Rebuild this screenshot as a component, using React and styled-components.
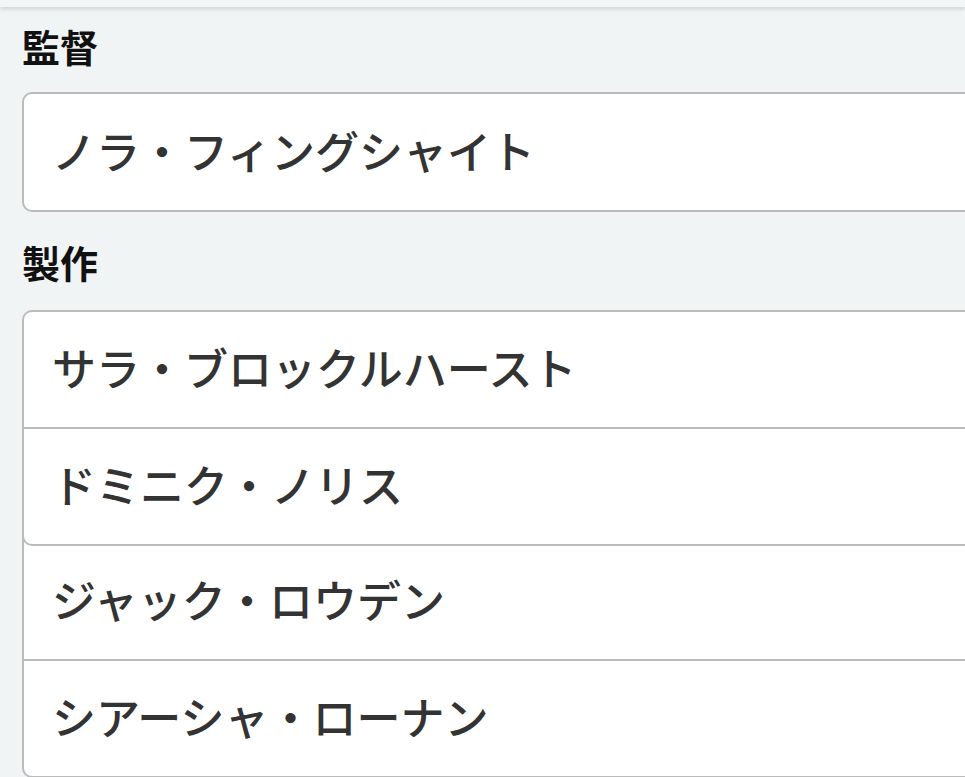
import React from 'react'
import styled, { createGlobalStyle } from 'styled-components'

const GlobalStyle = createGlobalStyle`
  html, body {
    margin: 0;
    padding: 0;
    background: #f1f4f5;
    overflow: hidden;
  }
  body {
    font-family: "Noto Sans CJK JP", "Noto Sans", sans-serif;
  }
`

const Page = styled.div`
  min-height: 777px;
  overflow: hidden;
`

const TopBar = styled.div`
  height: 7px;
  background: #f3f5f6;
  box-shadow: 0 2px 4px rgba(0, 0, 0, 0.14);
`

const Content = styled.div`
  padding: 0 0 0 22px;
  margin-right: -60px;
`

const Heading = styled.h2`
  margin: ${p => p.$top}px 0 ${p => p.$bottom}px 0;
  font-size: 38px;
  line-height: 44px;
  font-weight: 700;
  color: #111;
`

const Card = styled.div`
  position: relative;
  z-index: ${p => (p.$continued ? 0 : 1)};
  background: #fff;
  border: 2px solid #bbb;
  border-radius: 10px;
  ${p =>
    p.$continued &&
    `
    margin-top: -14px;
    padding-top: 12px;
    border-top: none;
    border-top-left-radius: 0;
    border-top-right-radius: 0;
  `}
`

const Row = styled.div`
  box-sizing: border-box;
  height: ${p => p.$height}px;
  display: flex;
  align-items: center;
  padding: 0 0 5px 28px;
  font-size: 44px;
  font-weight: 500;
  color: #333;
  border-top: ${p => (p.$first ? 'none' : '2px solid #bbb')};
`

const List = ({ names, continued, rowHeight = 115 }) => (
  <Card $continued={continued}>
    {names.map((n, i) => (
      <Row key={n} $first={i === 0} $height={rowHeight + (i === 0 ? 0 : 2)}>{n}</Row>
    ))}
  </Card>
)

export default function App() {
  return (
    <Page>
      <GlobalStyle />
      <TopBar />
      <Content>
        <Heading $top={17} $bottom={24}>監督</Heading>
        <List rowHeight={116} names={['ノラ・フィングシャイト']} />
        <Heading $top={28} $bottom={26}>製作</Heading>
        <List names={['サラ・ブロックルハースト', 'ドミニク・ノリス']} />
        <List continued names={['ジャック・ロウデン', 'シアーシャ・ローナン']} />
      </Content>
    </Page>
  )
}
